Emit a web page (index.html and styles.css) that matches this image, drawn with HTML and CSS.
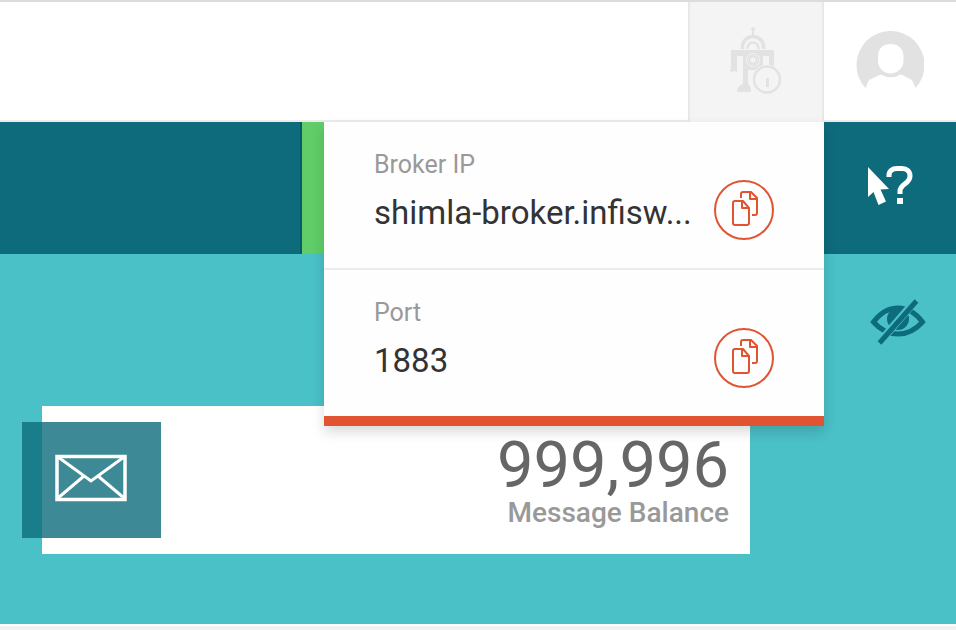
FILE: index.html
```html
<!DOCTYPE html>
<html lang="en">
<head>
<meta charset="utf-8">
<title>Message Balance</title>
<link rel="stylesheet" href="styles.css">
</head>
<body>
<header class="topbar">
  <div class="broker">
    <button class="broker-toggle" type="button" aria-label="Broker details" aria-expanded="true">
      <svg width="52" height="70" viewBox="0 0 52 70" fill="none" stroke="#e2e2e2">
        <circle cx="23" cy="3" r="2" fill="#e2e2e2" stroke="none"/>
        <path d="M23 4v7" stroke-width="2"/>
        <path d="M12.500 23v-2a10.500 10.500 0 0 1 21 0v2" stroke-width="3.500"/>
        <path d="M17.500 23v-1a5.500 5.500 0 0 1 11 0v1" stroke-width="2.500"/>
        <path d="M1 24h43v20H13V30H7v13l1 3-3-1-3 1-2-1 1-3zM33 30v9h6v-9z" fill="#e2e2e2" fill-rule="evenodd" stroke="none"/>
        <path d="M13 40h5v18q3 2 3 8H7q0-6 6-8z" fill="#e2e2e2" stroke="none"/>
        <circle cx="23" cy="34" r="7" fill="#f4f4f4" stroke="none"/>
        <circle cx="23" cy="34" r="5.500" stroke-width="1.500"/>
        <circle cx="23" cy="34" r="3.500" stroke-width="2"/>
        <circle cx="37" cy="53.500" r="15" fill="#f4f4f4" stroke="none"/>
        <circle cx="37" cy="53.500" r="13" fill="#f4f4f4" stroke-width="2.500"/>
        <path d="M37.500 52v9" stroke-width="3"/>
      </svg>
    </button>
    <div class="menu">
      <dl class="entry">
        <div class="entry-text"><dt>Broker IP</dt><dd>shimla-broker.infisw...</dd></div>
        <dd><button class="copy" type="button" aria-label="Copy broker IP"><svg width="28" height="36" viewBox="0 0 28 36"><use href="#copy-icon"/></svg></button></dd>
      </dl>
      <dl class="entry">
        <div class="entry-text"><dt>Port</dt><dd>1883</dd></div>
        <dd><button class="copy" type="button" aria-label="Copy port"><svg width="28" height="36" viewBox="0 0 28 36"><use href="#copy-icon"/></svg></button></dd>
      </dl>
    </div>
  </div>
  <button class="account" type="button" aria-label="Account">
    <svg width="68" height="58" viewBox="0 0 68 58">
      <path fill="#e2e2e2" fill-rule="evenodd" d="M9.500 57A34 34 0 1 1 59.500 57L56 49 45 43.500Q34.500 49 24.500 43.500L13 49zM34.500 13C27 13 22 17.500 22 25v5c0 7 6 12.500 12.500 12.500S47.500 37 47.500 30v-5c0-7.500-5.500-12-13-12z"/>
    </svg>
  </button>
</header>
<div class="banner">
  <div class="banner-start"></div>
  <div class="banner-accent"></div>
  <button class="help" type="button" aria-label="Help">
    <svg width="46" height="40" viewBox="0 0 46 40">
      <path fill="#fff" d="M1 1L22 23 13.500 23.500 19 35.500 11.500 39 6.500 26 1 31z"/>
      <path fill="none" stroke="#fff" stroke-width="5" d="M22 11V9.500C22 5 25 2.500 30 2.500h5c5 0 8 3 8 7.500 0 8-10 8-10 15v3"/>
      <path fill="#fff" d="M30 32h6v6h-6z"/>
    </svg>
  </button>
</div>
<main class="dashboard">
  <section class="card">
    <div class="card-icon">
      <svg width="72" height="48" viewBox="0 0 72 48" fill="none" stroke="#fff">
        <path stroke-width="3.500" d="M2 2.500h68v43H2z"/>
        <path stroke-width="3" d="M3 3L36 27 69 3M3 44L29 22M69 44L43 22"/>
      </svg>
    </div>
    <div class="card-text">
      <p class="value">999,996</p>
      <h2 class="label">Message Balance</h2>
    </div>
  </section>
  <button class="hide" type="button" aria-label="Hide balance">
    <svg width="56" height="46" viewBox="0 0 56 46">
      <path fill="none" stroke="#0d6b7b" stroke-width="5" d="M3.500 23Q14 9 28 9T52.500 23Q42 35 28 35T3.500 23z"/>
      <circle cx="28" cy="20" r="11" fill="#0d6b7b"/>
      <path stroke="#4ac0c7" stroke-width="8" d="M8 45L46 1"/>
      <path stroke="#0d6b7b" stroke-width="5" d="M9.500 44L46.500 2"/>
    </svg>
  </button>
</main>
<svg class="symbols" aria-hidden="true">
  <symbol id="copy-icon" viewBox="0 0 28 36">
    <path fill="none" stroke="#e05431" stroke-width="2" stroke-linejoin="round" d="M4 10h8l6 7v15q0 2-2 2H4q-2 0-2-2V12q0-2 2-2zM11 10v7h7M10 7V3q0-2 2-2h8l6 6v15q0 2-2 2h-3M19 1v7h7"/>
  </symbol>
</svg>
</body>
</html>
```
FILE: styles.css
```css
* { box-sizing: border-box; }
body {
  margin: 0;
  min-height: 100vh;
  display: flex;
  flex-direction: column;
  background: #f1f1f1;
  font-family: Roboto, "Liberation Sans", sans-serif;
}
button {
  padding: 0;
  border: 0;
  background: none;
  display: flex;
  align-items: center;
  justify-content: center;
}
svg { display: block; }
dl, dd, p, h2 { margin: 0; }
.symbols { display: none; }

.topbar {
  display: flex;
  justify-content: flex-end;
  height: 122px;
  background: #fff;
  border-top: 2px solid #dcdcdc;
  border-bottom: 2px solid #ececec;
}
.broker {
  position: relative;
  display: flex;
}
.broker-toggle {
  width: 136px;
  height: 120px;
  padding-bottom: 2px;
  background: #f4f4f4;
  border: 2px solid #e8e8e8;
  border-width: 0 2px;
}
.account {
  width: 132px;
  padding-bottom: 2px;
}

.menu {
  position: absolute;
  top: 120px;
  right: 0;
  width: 500px;
  background: #fefefe;
  border-bottom: 10px solid #e05431;
  box-shadow: 0 6px 12px rgba(0, 0, 0, 0.15);
}
.entry {
  display: flex;
  justify-content: space-between;
  height: 146px;
  padding: 22px 50px 0;
}
.entry + .entry {
  height: 148px;
  border-top: 2px solid #ebeced;
}
.entry-text dt {
  font-size: 25px;
  line-height: 42px;
  color: #999;
}
.entry-text dd {
  font-size: 33px;
  line-height: 54px;
  color: #333;
  white-space: nowrap;
}
.copy {
  width: 60px;
  height: 60px;
  margin-top: 36px;
  padding: 0 0 2px 2px;
  border: 2px solid #e05431;
  border-radius: 50%;
}

.banner {
  display: flex;
  height: 132px;
  background: #0d6b7b;
}
.banner-start {
  width: 302px;
  border-right: 2px solid #0b5a69;
}
.banner-accent {
  flex: 1;
  background: #60cd69;
}
.help {
  width: 132px;
  padding-bottom: 4px;
}

.dashboard {
  flex: 1;
  display: flex;
  align-items: flex-start;
  margin-bottom: 4px;
  padding: 0 30px 0 42px;
  background: #4ac0c7;
  border-bottom: 2px solid #fff;
}
.card {
  flex: 1;
  display: flex;
  justify-content: space-between;
  margin: 152px 120px 0 0;
  height: 148px;
  background: #fff;
}
.card-icon {
  display: flex;
  align-items: center;
  justify-content: center;
  width: 139px;
  height: 116px;
  margin: 16px 0 0 -20px;
  padding: 0 2px 4px 0;
  background: rgba(13, 107, 123, 0.8);
}
.card-text {
  padding: 26px 21px 0 0;
  text-align: right;
}
.value {
  font-size: 65px;
  line-height: 66px;
  color: #666;
}
.label {
  font-size: 28px;
  line-height: 30px;
  font-weight: 500;
  color: #999;
}
.hide { margin-top: 45px; }
```
